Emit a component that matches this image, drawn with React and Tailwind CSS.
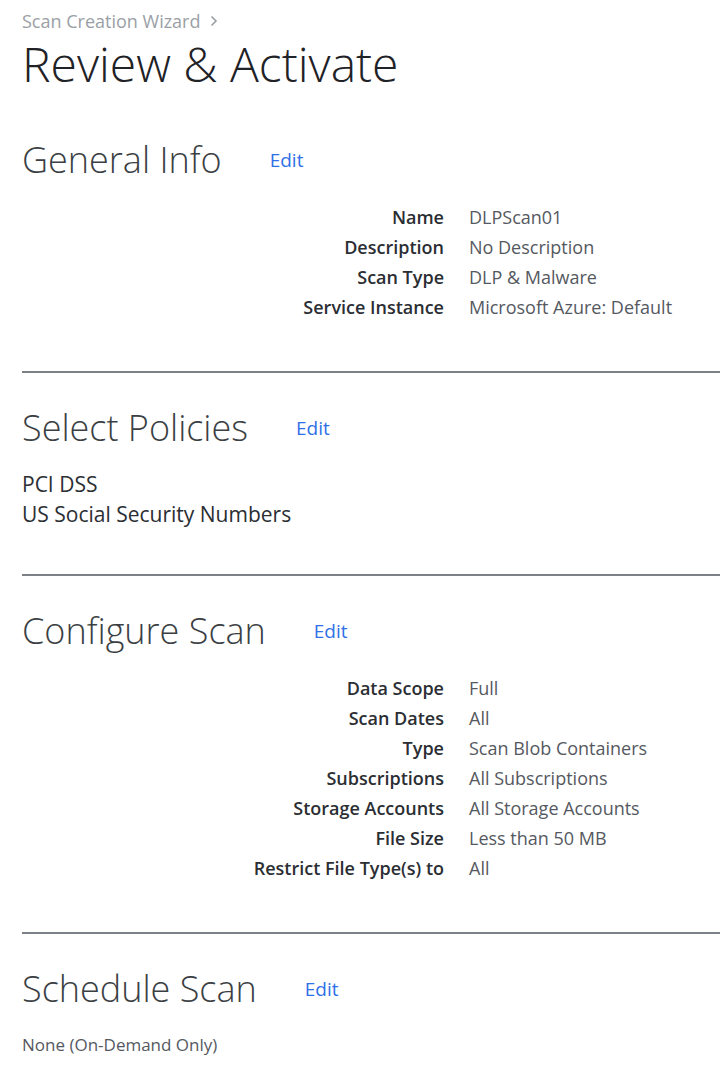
import React from "react";

const generalInfo = [
  ["Name", "DLPScan01"],
  ["Description", "No Description"],
  ["Scan Type", "DLP & Malware"],
  ["Service Instance", "Microsoft Azure: Default"],
];

const configureScan = [
  ["Data Scope", "Full"],
  ["Scan Dates", "All"],
  ["Type", "Scan Blob Containers"],
  ["Subscriptions", "All Subscriptions"],
  ["Storage Accounts", "All Storage Accounts"],
  ["File Size", "Less than 50 MB"],
  ["Restrict File Type(s) to", "All"],
];

const SectionHeader = ({ title }) => (
  <div className="flex items-center h-[40px]">
    <h2 className="text-[36px] font-light text-[#3b3f44] leading-none">{title}</h2>
    <a href="#" className="text-[19px] text-[#2f6fe8] ml-[48px]">
      Edit
    </a>
  </div>
);

const DetailRows = ({ rows }) => (
  <div className="grid grid-cols-[422px_1fr] gap-x-[25px] text-[18px]">
    {rows.map(([label, value]) => (
      <React.Fragment key={label}>
        <div className="text-right font-semibold text-[#2b2e33] h-[30px] leading-[30px]">{label}</div>
        <div className="text-[#55595f] h-[30px] leading-[30px]">{value}</div>
      </React.Fragment>
    ))}
  </div>
);

const Divider = () => <div className="h-[2px] bg-[#7c8187]" />;

export default function App() {
  return (
    <div
      className="pl-[22px] bg-white min-h-screen"
      style={{ fontFamily: '"Open Sans", sans-serif' }}
    >
      {/* Breadcrumb + title */}
      <div className="pt-[12px] flex items-center gap-[9px] text-[18px] text-[#9a9fa6] h-[30px]">
        <span>Scan Creation Wizard</span>
        <svg width="8" height="12" viewBox="0 0 8 12" fill="none" stroke="#9a9fa6" strokeWidth="1.6">
          <path d="M1.5 1.5 6 6l-4.5 4.5" />
        </svg>
      </div>
      <h1 className="text-[48px] font-light text-[#1f2226] leading-[60px] mt-[4px]">Review &amp; Activate</h1>

      {/* General Info */}
      <div className="mt-[46px]">
        <SectionHeader title="General Info" />
      </div>
      <div className="mt-[22px]">
        <DetailRows rows={generalInfo} />
      </div>
      <div className="mt-[49px]">
        <Divider />
      </div>

      {/* Select Policies */}
      <div className="mt-[35px]">
        <SectionHeader title="Select Policies" />
      </div>
      <div className="mt-[21px] text-[21px] text-[#2b2e33] leading-[30px]">
        <div>PCI DSS</div>
        <div>US Social Security Numbers</div>
      </div>
      <div className="mt-[45px]">
        <Divider />
      </div>

      {/* Configure Scan */}
      <div className="mt-[35px]">
        <SectionHeader title="Configure Scan" />
      </div>
      <div className="mt-[22px]">
        <DetailRows rows={configureScan} />
      </div>
      <div className="mt-[49px]">
        <Divider />
      </div>

      {/* Schedule Scan */}
      <div className="mt-[35px]">
        <SectionHeader title="Schedule Scan" />
      </div>
      <div className="mt-[21px] text-[17px] text-[#55595f] leading-[30px]">None (On-Demand Only)</div>
    </div>
  );
}
